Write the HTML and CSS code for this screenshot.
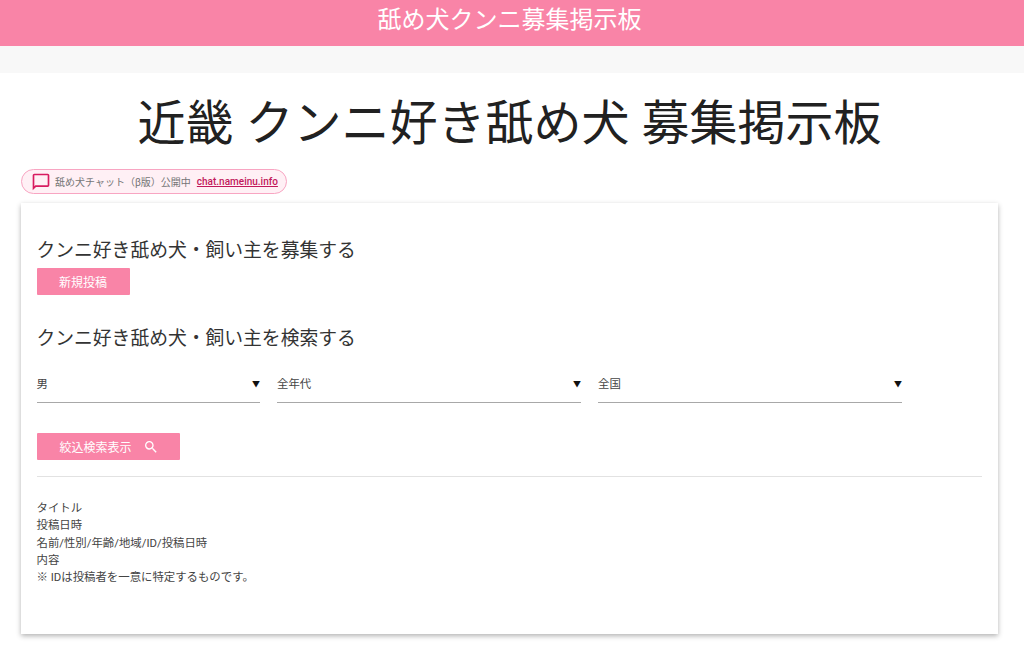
FILE: index.html
```html
<!DOCTYPE html>
<html lang="ja">
<head>
  <meta charset="UTF-8" />
  <title>近畿 クンニ好き舐め犬 募集掲示板</title>
  <link rel="stylesheet" href="styles.css">
</head>
<body>
  <header class="site-header">舐め犬クンニ募集掲示板</header>
  <div class="sub-bar"></div>

  <h1 class="page-title">近畿 クンニ好き舐め犬 募集掲示板</h1>

  <div class="notice-row">
    <div class="notice">
      <svg class="notice-icon" viewBox="0 0 24 24" width="20" height="20">
        <path fill="#d81b60" d="M20 2H4c-1.1 0-2 .9-2 2v18l4-4h14c1.1 0 2-.9 2-2V4c0-1.1-.9-2-2-2zm0 14H5.2L4 17.2V4h16v12z"/>
      </svg>
      <span class="notice-text">舐め犬チャット（β版）公開中</span>
      <a class="notice-link" href="#">chat.nameinu.info</a>
    </div>
  </div>

  <main class="card">
    <h2 class="section-title">クンニ好き舐め犬・飼い主を募集する</h2>
    <a class="btn btn-new" href="#">新規投稿</a>

    <h2 class="section-title section-search">クンニ好き舐め犬・飼い主を検索する</h2>
    <div class="filters">
      <div class="select select-sex"><span>男</span><span class="arrow">▼</span></div>
      <div class="select select-age"><span>全年代</span><span class="arrow">▼</span></div>
      <div class="select select-area"><span>全国</span><span class="arrow">▼</span></div>
    </div>

    <a class="btn btn-search" href="#">
      <span>絞込検索表示</span>
      <svg viewBox="0 0 24 24" width="16" height="16">
        <path fill="#fff" d="M15.5 14h-.79l-.28-.27A6.47 6.47 0 0 0 16 9.5 6.5 6.5 0 1 0 9.5 16c1.61 0 3.09-.59 4.23-1.57l.27.28v.79l5 4.99L20.49 19l-4.99-5zm-6 0C7.01 14 5 11.99 5 9.5S7.01 5 9.5 5 14 7.01 14 9.5 11.99 14 9.5 14z"/>
      </svg>
    </a>

    <hr class="divider">

    <div class="legend">
      <div>タイトル</div>
      <div>投稿日時</div>
      <div>名前/性別/年齢/地域/ID/投稿日時</div>
      <div>内容</div>
      <div>※ IDは投稿者を一意に特定するものです。</div>
    </div>
  </main>
</body>
</html>
```

FILE: styles.css
```css
* {
  box-sizing: border-box;
}

body {
  margin: 0;
  min-height: 645px;
  padding-bottom: 11px;
  background: #fff;
  color: #212121;
  font-family: Roboto, "Noto Sans CJK JP", sans-serif;
}

.site-header {
  height: 46px;
  padding-right: 5px;
  background: #f984a7;
  color: #fff;
  font-size: 24px;
  line-height: 40px;
  text-align: center;
}

.sub-bar {
  height: 27px;
  background: #f8f8f8;
}

.page-title {
  margin: 18px 0 0;
  padding-right: 5px;
  font-size: 48px;
  font-weight: 400;
  line-height: 66px;
  text-align: center;
}

.notice-row {
  display: flex;
  padding: 12px 21px 0;
}

.notice {
  display: flex;
  align-items: center;
  height: 25px;
  padding: 0 8px 0 8.5px;
  background: #fff0f5;
  border: 1px solid #f8a5c2;
  border-radius: 13px;
  font-size: 10px;
}

.notice-icon {
  margin-right: 4.5px;
}

.notice-text {
  color: #757575;
  margin-right: 6px;
}

.notice-link {
  color: #c2185b;
  font-weight: 500;
}

.card {
  margin: 9px 26px 0 21px;
  height: 431px;
  padding: 36px 16px 0 15.5px;
  background: #fff;
  box-shadow: 0 2px 5px rgba(0, 0, 0, 0.3);
}

.section-title {
  margin: 0;
  font-size: 18.8px;
  font-weight: 400;
  line-height: 25px;
  color: #333;
}

.section-search {
  margin-top: 32px;
}

.btn {
  display: flex;
  align-items: center;
  height: 27px;
  background: #f984a7;
  color: #fff;
  font-size: 12px;
  text-decoration: none;
  border-radius: 1px;
}

.btn-new {
  width: 93px;
  margin-top: 4px;
  justify-content: center;
}

.btn-search {
  width: 143px;
  margin-top: 30px;
  padding-left: 23px;
  gap: 11px;
}

.filters {
  display: flex;
  gap: 17px;
  margin-top: 17px;
}

.select {
  display: flex;
  justify-content: space-between;
  height: 34px;
  padding-top: 6px;
  border-bottom: 1px solid #a8a8a8;
  font-size: 11.4px;
  line-height: 18px;
  color: #444;
}

.select-sex {
  width: 223.5px;
}

.select-age,
.select-area {
  width: 304px;
}

.arrow {
  color: #111;
  font-size: 8px;
  line-height: 20px;
}

.divider {
  margin: 16px 0 0;
  border: 0;
  border-top: 1px solid #e2e2e2;
}

.legend {
  margin-top: 23px;
  font-size: 11.4px;
  line-height: 17.25px;
  color: #444;
}
```
